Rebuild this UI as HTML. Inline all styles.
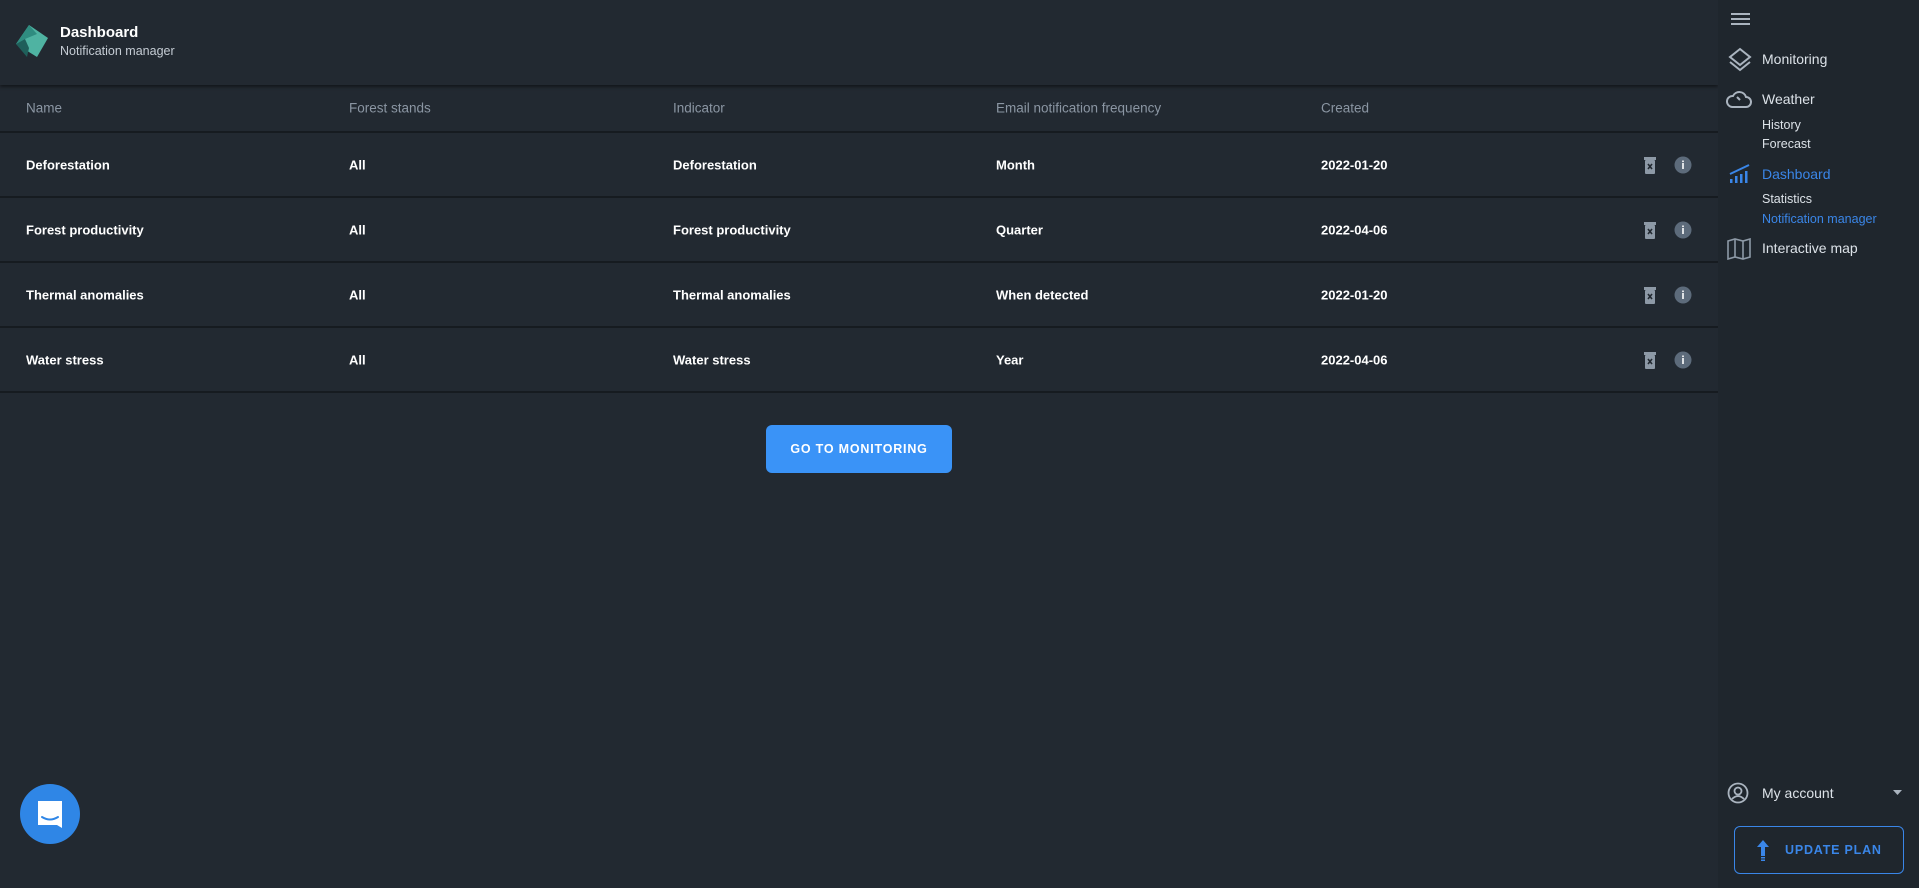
<!DOCTYPE html>
<html><head><meta charset="utf-8"><style>
*{margin:0;padding:0;box-sizing:border-box}
html,body{width:1919px;height:888px;overflow:hidden;background:#222931;font-family:"Liberation Sans",sans-serif;color:#fff}
.main{position:absolute;left:0;top:0;width:1718px;height:888px;background:#222931}
.hdr{position:absolute;left:0;top:0;width:1718px;height:85px;background:#222931;box-shadow:0 2px 3px rgba(0,0,0,.45)}
.t1{position:absolute;left:60px;top:24px;font-size:15px;font-weight:bold}
.t2{position:absolute;left:60px;top:44px;font-size:12.5px;color:#c5ccd4}
.row{position:absolute;left:0;width:1718px;border-bottom:2px solid #161b20}
.c{position:absolute;transform:translateY(-50%)}
.th .c{color:#8b96a3;font-size:13.5px}
.td .c{color:#fff;font-weight:bold;font-size:13px}
.btn{position:absolute;left:766px;top:425px;width:186px;height:48px;background:#3a93f7;border-radius:6px;color:#fff;font-size:12.5px;font-weight:bold;letter-spacing:.8px;text-align:center;line-height:48px}
.side{position:absolute;left:1718px;top:0;width:201px;height:888px;background:#1f262d}
.si{position:absolute;left:44px;font-size:14px;color:#dce2e8;transform:translateY(-50%)}
.ss{position:absolute;left:44px;font-size:12.5px;color:#dce2e8;transform:translateY(-50%)}
.ic{position:absolute}
.up{position:absolute;left:16px;top:826px;width:170px;height:48px;border:1.5px solid #3a86e8;border-radius:6px;color:#3a86e8;font-size:12.5px;font-weight:bold;letter-spacing:.8px;line-height:46px;padding-left:50px}
</style></head><body>
<div class="main">
<div class="hdr">
<svg class="ic" style="left:15px;top:24px" width="34" height="34" viewBox="0 0 34 34"><polygon points="14,1 33,14 22,33 1,20" fill="#4fb3a2"/><polygon points="14,1 22,10 10,15 1,20" fill="#2f8c80"/><polygon points="1,20 10,15 14,24 12,33" fill="#1f5f5a"/></svg>
<div class="t1">Dashboard</div><div class="t2">Notification manager</div>
</div>
<div class="row th" style="top:85px;height:48px">
<div class="c" style="left:26px;top:23px">Name</div><div class="c" style="left:349px;top:23px">Forest stands</div><div class="c" style="left:673px;top:23px">Indicator</div><div class="c" style="left:996px;top:23px">Email notification frequency</div><div class="c" style="left:1321px;top:23px">Created</div>
</div>
<div class="row td" style="top:133px;height:65px"><div class="c" style="left:26px;top:32px">Deforestation</div><div class="c" style="left:349px;top:32px">All</div><div class="c" style="left:673px;top:32px">Deforestation</div><div class="c" style="left:996px;top:32px">Month</div><div class="c" style="left:1321px;top:32px">2022-01-20</div></div>
<div class="row td" style="top:198px;height:65px"><div class="c" style="left:26px;top:32px">Forest productivity</div><div class="c" style="left:349px;top:32px">All</div><div class="c" style="left:673px;top:32px">Forest productivity</div><div class="c" style="left:996px;top:32px">Quarter</div><div class="c" style="left:1321px;top:32px">2022-04-06</div></div>
<div class="row td" style="top:263px;height:65px"><div class="c" style="left:26px;top:32px">Thermal anomalies</div><div class="c" style="left:349px;top:32px">All</div><div class="c" style="left:673px;top:32px">Thermal anomalies</div><div class="c" style="left:996px;top:32px">When detected</div><div class="c" style="left:1321px;top:32px">2022-01-20</div></div>
<div class="row td" style="top:328px;height:65px"><div class="c" style="left:26px;top:32px">Water stress</div><div class="c" style="left:349px;top:32px">All</div><div class="c" style="left:673px;top:32px">Water stress</div><div class="c" style="left:996px;top:32px">Year</div><div class="c" style="left:1321px;top:32px">2022-04-06</div></div>
<svg class="ic" style="left:1640px;top:150px" width="60" height="240" viewBox="0 0 60 240">
<g id="a"><rect x="4" y="7" width="12" height="3" fill="#8d99a6"/><rect x="5" y="10" width="10" height="14" rx="1" fill="#8d99a6"/><path d="M8 14l4 5M12 14l-4 5" stroke="#222931" stroke-width="1.6"/><circle cx="43" cy="15" r="8.5" fill="#5d6b7b"/><rect x="42.2" y="13" width="1.6" height="6" fill="#fff"/><rect x="42.2" y="10.5" width="1.6" height="1.6" fill="#fff"/></g>
<use href="#a" y="65"/><use href="#a" y="130"/><use href="#a" y="195"/>
</svg>
<div class="btn">GO TO MONITORING</div>
<svg class="ic" style="left:20px;top:784px" width="60" height="60" viewBox="0 0 60 60"><circle cx="30" cy="30" r="30" fill="#2f86e6"/><path d="M18 17h24v27l-5-3H18z" fill="#fff"/><path d="M22 33q8 5 16 0" stroke="#2f86e6" stroke-width="2" fill="none" stroke-linecap="round"/></svg>
</div>
<div class="side">
<svg class="ic" style="left:13px;top:12px" width="20" height="14"><rect y="1" width="19" height="2" fill="#aab4bf"/><rect y="6" width="19" height="2" fill="#aab4bf"/><rect y="11" width="19" height="2" fill="#aab4bf"/></svg>
<svg class="ic" style="left:9px;top:47px" width="26" height="26" viewBox="0 0 26 26" fill="none" stroke="#aab4bf" stroke-width="2"><path d="M13 2l10 8-10 8-10-8z"/><path d="M3 15l10 8 10-8"/></svg>
<div class="si" style="top:59px">Monitoring</div>
<svg class="ic" style="left:8px;top:89px" width="26" height="20" viewBox="0 0 26 20" fill="none" stroke="#aab4bf" stroke-width="2"><path d="M6 18h14a5 5 0 0 0 0-10 7 7 0 0 0-13-1 5.5 5.5 0 0 0-1 11z"/><path d="M11 8l3 3"/></svg>
<div class="si" style="top:99px">Weather</div>
<div class="ss" style="top:125px">History</div>
<div class="ss" style="top:144px">Forecast</div>
<svg class="ic" style="left:11px;top:164px" width="22" height="20" viewBox="0 0 22 20"><path d="M1 10L20 1" stroke="#3a86e8" stroke-width="2"/><rect x="1" y="15" width="2.5" height="4" fill="#3a86e8"/><rect x="6" y="12" width="2.5" height="7" fill="#3a86e8"/><rect x="11" y="10" width="2.5" height="9" fill="#3a86e8"/><rect x="16" y="7" width="2.5" height="12" fill="#3a86e8"/></svg>
<div class="si" style="top:174px;color:#3a86e8">Dashboard</div>
<div class="ss" style="top:199px">Statistics</div>
<div class="ss" style="top:219px;color:#3a86e8">Notification manager</div>
<svg class="ic" style="left:9px;top:238px" width="24" height="22" viewBox="0 0 24 22" fill="none" stroke="#8d99a6" stroke-width="1.6"><path d="M1 3l7-2 8 2 7-2v18l-7 2-8-2-7 2z"/><path d="M8 1v18M16 3v18"/></svg>
<div class="si" style="top:248px">Interactive map</div>
<svg class="ic" style="left:9px;top:782px" width="22" height="22" viewBox="0 0 22 22" fill="none" stroke="#aab4bf" stroke-width="1.8"><circle cx="11" cy="11" r="9.5"/><circle cx="11" cy="9" r="3.5"/><path d="M5 17q6-6 12 0"/></svg>
<div class="si" style="top:793px">My account</div>
<svg class="ic" style="left:175px;top:790px" width="10" height="6"><path d="M0 0h9l-4.5 5z" fill="#aab4bf"/></svg>
<div class="up">UPDATE PLAN</div>
<svg class="ic" style="left:39px;top:840px" width="12" height="22" viewBox="0 0 12 22"><path d="M6 0l6 7H8v9H4V7H0z" fill="#3a86e8"/><rect x="4" y="17" width="4" height="1.5" fill="#3a86e8"/><rect x="4" y="19.5" width="4" height="1.5" fill="#3a86e8"/></svg>
</div>
</body></html>
